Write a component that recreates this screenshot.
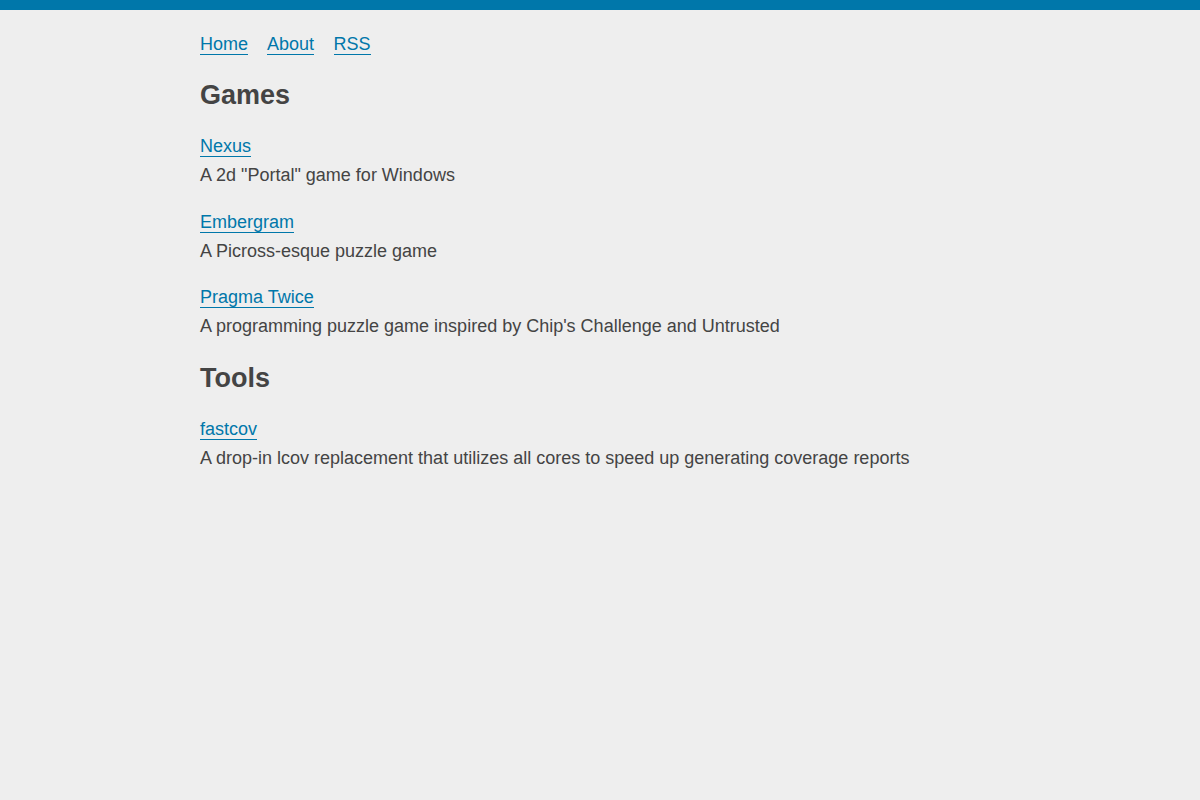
const games = [
  { name: "Nexus", desc: 'A 2d "Portal" game for Windows' },
  { name: "Embergram", desc: "A Picross-esque puzzle game" },
  {
    name: "Pragma Twice",
    desc: "A programming puzzle game inspired by Chip's Challenge and Untrusted",
  },
];

const tools = [
  {
    name: "fastcov",
    desc: "A drop-in lcov replacement that utilizes all cores to speed up generating coverage reports",
  },
];

const linkCls = "text-[#0077aa] border-b border-[#0077aa] no-underline";

const Entry = ({ name, desc }: { name: string; desc: string }) => (
  <div className="mb-[18px]">
    <a href="#" className={linkCls}>
      {name}
    </a>
    <p>{desc}</p>
  </div>
);

export default function App() {
  return (
    <div className="min-h-screen bg-[#eeeeee] text-[#444444] text-[18px] leading-[1.6] font-['Liberation_Sans',Arial,sans-serif]">
      <div className="h-[10px] bg-[#0077aa]"></div>
      <main className="max-w-[800px] mx-auto pt-[20px]">
        <nav>
          <a href="#" className={`${linkCls} mr-[19px]`}>Home</a>
          <a href="#" className={`${linkCls} mr-[19.5px]`}>About</a>
          <a href="#" className={linkCls}>RSS</a>
        </nav>

        <h2 className="text-[27px] font-bold leading-[1.2] mt-[20px] mb-[21px]">Games</h2>
        {games.map((g) => (
          <Entry key={g.name} {...g} />
        ))}

        <h2 className="text-[27px] font-bold leading-[1.2] mt-[21px] mb-[21px]">Tools</h2>
        {tools.map((t) => (
          <Entry key={t.name} {...t} />
        ))}
      </main>
    </div>
  );
}
